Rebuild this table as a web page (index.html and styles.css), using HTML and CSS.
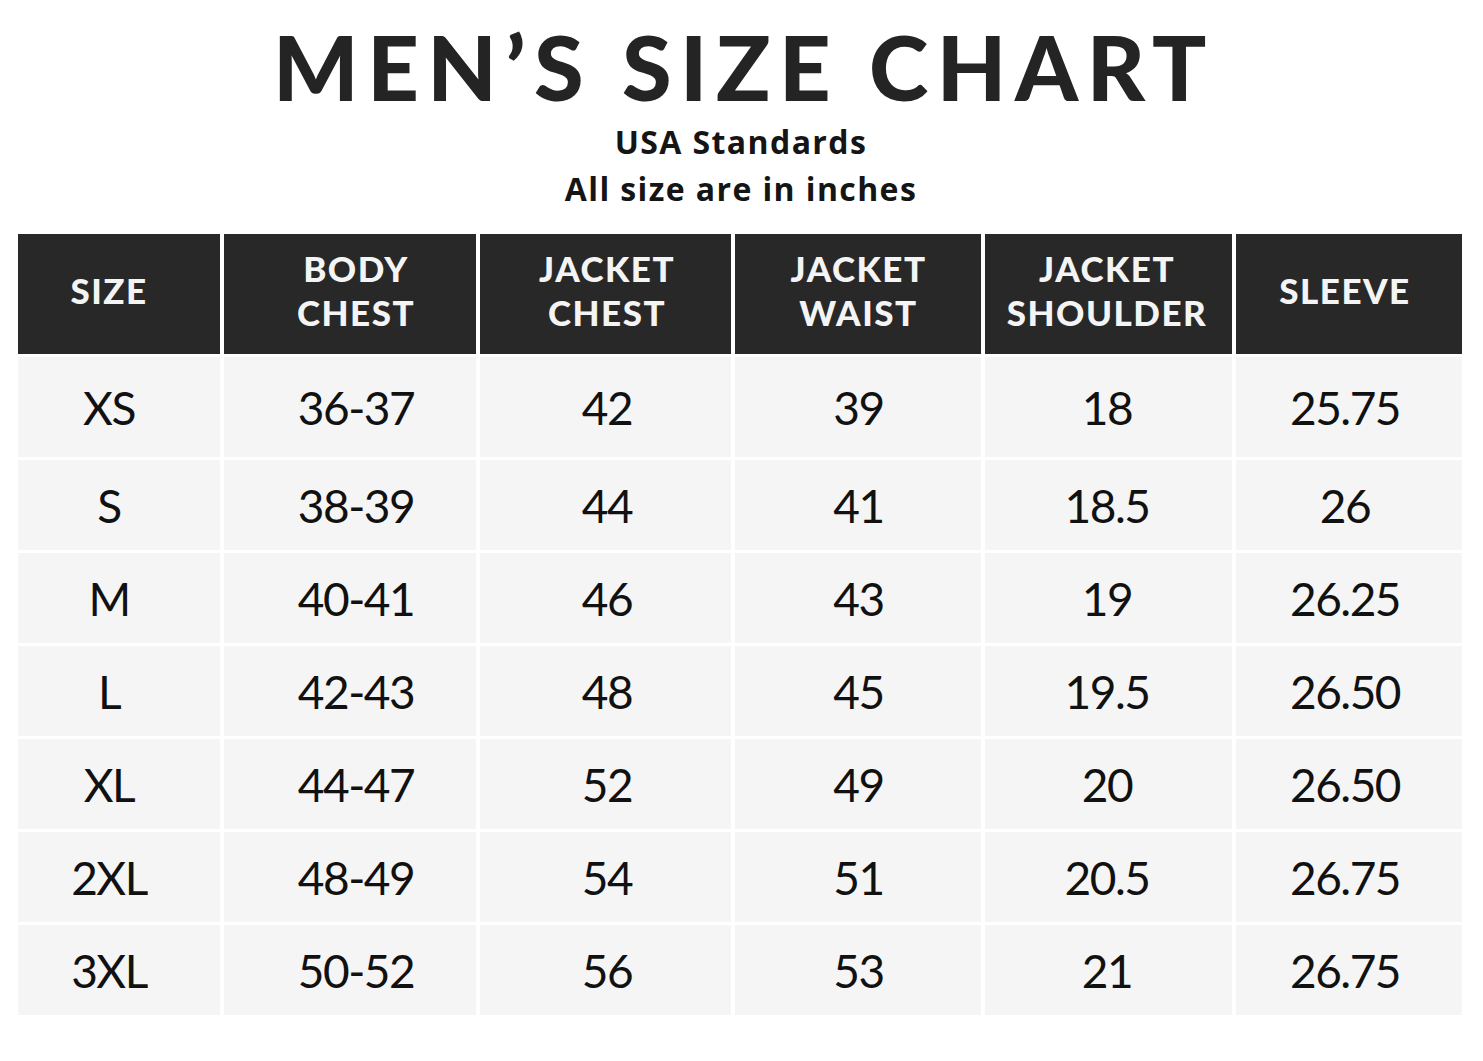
FILE: index.html
```html
<!DOCTYPE html>
<html>
<head>
<meta charset="utf-8">
<link rel="stylesheet" href="styles.css">
</head>
<body>
<div class="page">
  <h1 class="title">MEN’S SIZE CHART</h1>
  <div class="sub first">USA Standards</div>
  <div class="sub last">All size are in inches</div>
  <div class="chart">
    <div class="hd">SIZE</div>
    <div class="hd">BODY<br>CHEST</div>
    <div class="hd">JACKET<br>CHEST</div>
    <div class="hd">JACKET<br>WAIST</div>
    <div class="hd">JACKET<br>SHOULDER</div>
    <div class="hd">SLEEVE</div>

    <div class="cell">XS</div><div class="cell">36-37</div><div class="cell">42</div><div class="cell">39</div><div class="cell">18</div><div class="cell">25.75</div>
    <div class="cell">S</div><div class="cell">38-39</div><div class="cell">44</div><div class="cell">41</div><div class="cell">18.5</div><div class="cell">26</div>
    <div class="cell">M</div><div class="cell">40-41</div><div class="cell">46</div><div class="cell">43</div><div class="cell">19</div><div class="cell">26.25</div>
    <div class="cell">L</div><div class="cell">42-43</div><div class="cell">48</div><div class="cell">45</div><div class="cell">19.5</div><div class="cell">26.50</div>
    <div class="cell">XL</div><div class="cell">44-47</div><div class="cell">52</div><div class="cell">49</div><div class="cell">20</div><div class="cell">26.50</div>
    <div class="cell">2XL</div><div class="cell">48-49</div><div class="cell">54</div><div class="cell">51</div><div class="cell">20.5</div><div class="cell">26.75</div>
    <div class="cell">3XL</div><div class="cell">50-52</div><div class="cell">56</div><div class="cell">53</div><div class="cell">21</div><div class="cell">26.75</div>
  </div>
</div>
</body>
</html>
```

FILE: styles.css
```css
html, body {
  margin: 0;
  padding: 0;
  background: #ffffff;
}
.page {
  width: 1483px;
  padding: 16px 0 0 18px;
  box-sizing: border-box;
  font-family: Lato, "Liberation Sans", sans-serif;
  color: #1c1c1c;
}
.title {
  margin: 0;
  width: 1444px;
  padding-left: 8px;
  box-sizing: border-box;
  text-align: center;
  font-family: Lato, sans-serif;
  font-weight: 900;
  font-size: 90px;
  line-height: 100px;
  letter-spacing: 8.5px;
  color: #242424;
}
.sub {
  width: 1444px;
  padding-left: 2px;
  box-sizing: border-box;
  text-align: center;
  font-family: "Open Sans", sans-serif;
  font-weight: 700;
  font-size: 32px;
  line-height: 47px;
  letter-spacing: 1.4px;
  color: #151515;
}
.sub.first {
  margin-top: 2px;
}
.sub.last {
  margin-bottom: 22px;
}
.chart {
  display: grid;
  width: 1444px;
  grid-template-columns: 202px 252px 251px 246px 247px 226px;
  grid-template-rows: 120px 100px repeat(6, 90px);
  column-gap: 4px;
  row-gap: 3px;
}
.hd {
  background: #282828;
  color: #f4f4f4;
  display: flex;
  align-items: center;
  justify-content: center;
  text-align: center;
  font-family: Lato, sans-serif;
  font-weight: 900;
  font-size: 35px;
  line-height: 44px;
  letter-spacing: 1.5px;
  padding-bottom: 8px;
  box-sizing: border-box;
}
.cell {
  background: #f5f5f5;
  display: flex;
  align-items: center;
  justify-content: center;
  font-family: Lato, sans-serif;
  font-weight: 400;
  font-size: 46px;
  letter-spacing: -1.5px;
  color: #111;
}
.chart > :nth-child(6n+1) { padding-right: 20px; }
.chart > :nth-child(6n+2) { padding-left: 12px; }
.chart > :nth-child(6n+3) { padding-left: 3px; }
.chart > :nth-child(6n+4) { padding-left: 1px; }
.chart > :nth-child(6n+5) { padding-right: 3px; }
.chart > :nth-child(6n) { padding-right: 8px; }
.cell, .hd { box-sizing: border-box; }
```
